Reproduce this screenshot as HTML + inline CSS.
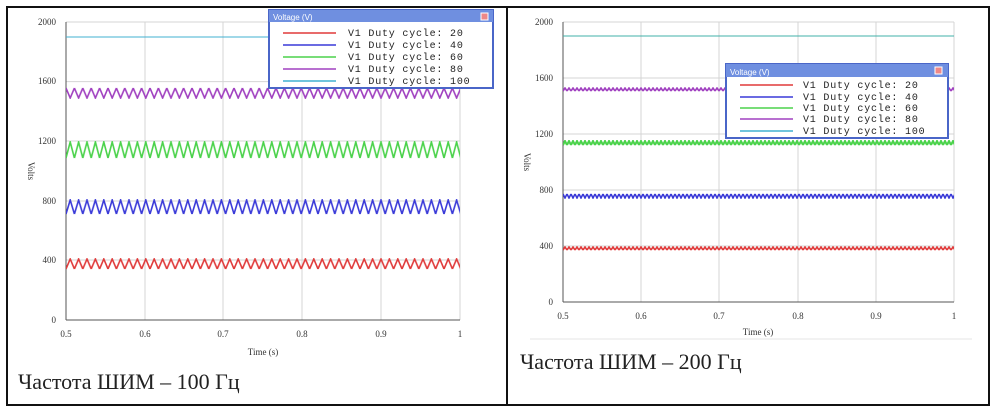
<!DOCTYPE html>
<html><head><meta charset="utf-8"><style>
body{margin:0;width:992px;height:408px;background:#fff;overflow:hidden;font-family:"Liberation Serif",serif}
svg{position:absolute;left:0;top:0}
</style></head><body>
<svg width="992" height="408" xmlns="http://www.w3.org/2000/svg" font-family="Liberation Serif, serif">
<defs>
<pattern id="zr" patternUnits="userSpaceOnUse" x="66" y="258" width="8.4" height="12"><path d="M0,11 L4.2,1 L8.4,11" fill="none" stroke="#e03a3a" stroke-width="1.6"/></pattern>
<pattern id="zb" patternUnits="userSpaceOnUse" x="66" y="199" width="8.4" height="16"><path d="M0,15 L4.2,1 L8.4,15" fill="none" stroke="#3a3ad8" stroke-width="1.6"/></pattern>
<pattern id="zg" patternUnits="userSpaceOnUse" x="66" y="141" width="8.4" height="18"><path d="M0,17 L4.2,1 L8.4,17" fill="none" stroke="#4bd24b" stroke-width="1.6"/></pattern>
<pattern id="zp" patternUnits="userSpaceOnUse" x="66" y="87" width="8.4" height="12"><path d="M0,1 L4.2,11 L8.4,1" fill="none" stroke="#a040c0" stroke-width="1.6"/></pattern>
<pattern id="sr" patternUnits="userSpaceOnUse" x="563" y="246" width="4" height="5"><path d="M0,4 L2,1 L4,4" fill="none" stroke="#e03a3a" stroke-width="1.6"/></pattern>
<pattern id="sb" patternUnits="userSpaceOnUse" x="563" y="193" width="4" height="6"><path d="M0,1 L2,5 L4,1" fill="none" stroke="#3a3ad8" stroke-width="1.6"/></pattern>
<pattern id="sg" patternUnits="userSpaceOnUse" x="563" y="140" width="4" height="6"><path d="M0,5 L2,1 L4,5" fill="none" stroke="#4bd24b" stroke-width="2"/></pattern>
<pattern id="sp" patternUnits="userSpaceOnUse" x="563" y="87" width="4" height="5"><path d="M0,4 L2,1 L4,4" fill="none" stroke="#a040c0" stroke-width="1.6"/></pattern>
</defs>
<rect x="7" y="7" width="982" height="398" fill="none" stroke="#111" stroke-width="2"/>
<line x1="507" y1="7" x2="507" y2="405" stroke="#111" stroke-width="2"/>

<g stroke="#d4d4d4" stroke-width="1">
<line x1="145" y1="22" x2="145" y2="320"/><line x1="223" y1="22" x2="223" y2="320"/><line x1="302" y1="22" x2="302" y2="320"/><line x1="381" y1="22" x2="381" y2="320"/><line x1="460" y1="22" x2="460" y2="320"/>
<line x1="66" y1="22" x2="460" y2="22"/><line x1="66" y1="81.6" x2="460" y2="81.6"/><line x1="66" y1="141" x2="460" y2="141"/><line x1="66" y1="201" x2="460" y2="201"/><line x1="66" y1="260" x2="460" y2="260"/>
</g>
<g stroke="#555"><line x1="66" y1="22" x2="66" y2="320"/><line x1="66" y1="320" x2="460" y2="320"/></g>
<line x1="66" y1="37" x2="460" y2="37" stroke="#40b0d0"/>
<rect x="66" y="87" width="394" height="12" fill="url(#zp)"/>
<rect x="66" y="141" width="394" height="18" fill="url(#zg)"/>
<rect x="66" y="199" width="394" height="16" fill="url(#zb)"/>
<rect x="66" y="258" width="394" height="12" fill="url(#zr)"/>
<g font-size="9" fill="#333" text-anchor="end">
<text x="56" y="25">2000</text><text x="56" y="84">1600</text><text x="56" y="144">1200</text><text x="56" y="204">800</text><text x="56" y="263">400</text><text x="56" y="323">0</text>
</g>
<g font-size="9" fill="#333" text-anchor="middle">
<text x="66" y="337">0.5</text><text x="145" y="337">0.6</text><text x="223" y="337">0.7</text><text x="302" y="337">0.8</text><text x="381" y="337">0.9</text><text x="460" y="337">1</text>
<text x="263" y="355">Time (s)</text>
</g>
<text x="28" y="171" font-size="9" fill="#333" transform="rotate(90 28 171)" text-anchor="middle">Volts</text>
<rect x="269" y="10" width="224" height="78" fill="#fff" stroke="#4a66c8" stroke-width="2"/>
<rect x="269" y="10" width="224" height="12" fill="#6f8fe0"/>
<text x="273" y="20" font-size="8" fill="#fff" font-family="Liberation Sans, sans-serif">Voltage (V)</text>
<rect x="481" y="13" width="7" height="7" fill="#e88" stroke="#fff"/>
<g stroke-width="1.5"><line x1="283" y1="33" x2="336" y2="33" stroke="#e03a3a"/><line x1="283" y1="45" x2="336" y2="45" stroke="#3a3ad8"/><line x1="283" y1="57" x2="336" y2="57" stroke="#4bd24b"/><line x1="283" y1="69" x2="336" y2="69" stroke="#a040c0"/><line x1="283" y1="81" x2="336" y2="81" stroke="#40b0d0"/></g>
<g font-size="10" fill="#222" font-family="Liberation Mono, monospace" letter-spacing="0.8">
<text x="348" y="36">V1 Duty cycle: 20</text><text x="348" y="48">V1 Duty cycle: 40</text><text x="348" y="60">V1 Duty cycle: 60</text><text x="348" y="72">V1 Duty cycle: 80</text><text x="348" y="84">V1 Duty cycle: 100</text>
</g>
<text x="18" y="389" font-size="22" fill="#222">Частота ШИМ – 100 Гц</text>

<g stroke="#d4d4d4" stroke-width="1">
<line x1="641" y1="22" x2="641" y2="302"/><line x1="719" y1="22" x2="719" y2="302"/><line x1="798" y1="22" x2="798" y2="302"/><line x1="876" y1="22" x2="876" y2="302"/><line x1="954" y1="22" x2="954" y2="302"/>
<line x1="563" y1="22" x2="954" y2="22"/><line x1="563" y1="78" x2="954" y2="78"/><line x1="563" y1="134" x2="954" y2="134"/><line x1="563" y1="190" x2="954" y2="190"/><line x1="563" y1="246" x2="954" y2="246"/>
</g>
<g stroke="#555"><line x1="563" y1="22" x2="563" y2="302"/><line x1="563" y1="302" x2="954" y2="302"/></g>
<line x1="563" y1="36" x2="954" y2="36" stroke="#40b0a8"/>
<rect x="563" y="87" width="391" height="5" fill="url(#sp)"/>
<rect x="563" y="140" width="391" height="6" fill="url(#sg)"/>
<rect x="563" y="193" width="391" height="6" fill="url(#sb)"/>
<rect x="563" y="246" width="391" height="5" fill="url(#sr)"/>
<g font-size="9" fill="#333" text-anchor="end">
<text x="553" y="25">2000</text><text x="553" y="81">1600</text><text x="553" y="137">1200</text><text x="553" y="193">800</text><text x="553" y="249">400</text><text x="553" y="305">0</text>
</g>
<g font-size="9" fill="#333" text-anchor="middle">
<text x="563" y="319">0.5</text><text x="641" y="319">0.6</text><text x="719" y="319">0.7</text><text x="798" y="319">0.8</text><text x="876" y="319">0.9</text><text x="954" y="319">1</text>
<text x="758" y="335">Time (s)</text>
</g>
<text x="524" y="162" font-size="9" fill="#333" transform="rotate(90 524 162)" text-anchor="middle">Volts</text>
<line x1="530" y1="339" x2="972" y2="339" stroke="#e4e4e4"/>
<rect x="726" y="64" width="222" height="74" fill="#fff" stroke="#4a66c8" stroke-width="2"/>
<rect x="726" y="64" width="222" height="13" fill="#6f8fe0"/>
<text x="730" y="75" font-size="8" fill="#fff" font-family="Liberation Sans, sans-serif">Voltage (V)</text>
<rect x="935" y="67" width="7" height="7" fill="#e88" stroke="#fff"/>
<g stroke-width="1.5"><line x1="740" y1="85" x2="793" y2="85" stroke="#e03a3a"/><line x1="740" y1="97" x2="793" y2="97" stroke="#3a3ad8"/><line x1="740" y1="108" x2="793" y2="108" stroke="#4bd24b"/><line x1="740" y1="119" x2="793" y2="119" stroke="#a040c0"/><line x1="740" y1="131" x2="793" y2="131" stroke="#40b0d0"/></g>
<g font-size="10" fill="#222" font-family="Liberation Mono, monospace" letter-spacing="0.8">
<text x="803" y="88">V1 Duty cycle: 20</text><text x="803" y="100">V1 Duty cycle: 40</text><text x="803" y="111">V1 Duty cycle: 60</text><text x="803" y="122">V1 Duty cycle: 80</text><text x="803" y="134">V1 Duty cycle: 100</text>
</g>
<text x="520" y="369" font-size="22" fill="#222">Частота ШИМ – 200 Гц</text>
</svg>
</body></html>
